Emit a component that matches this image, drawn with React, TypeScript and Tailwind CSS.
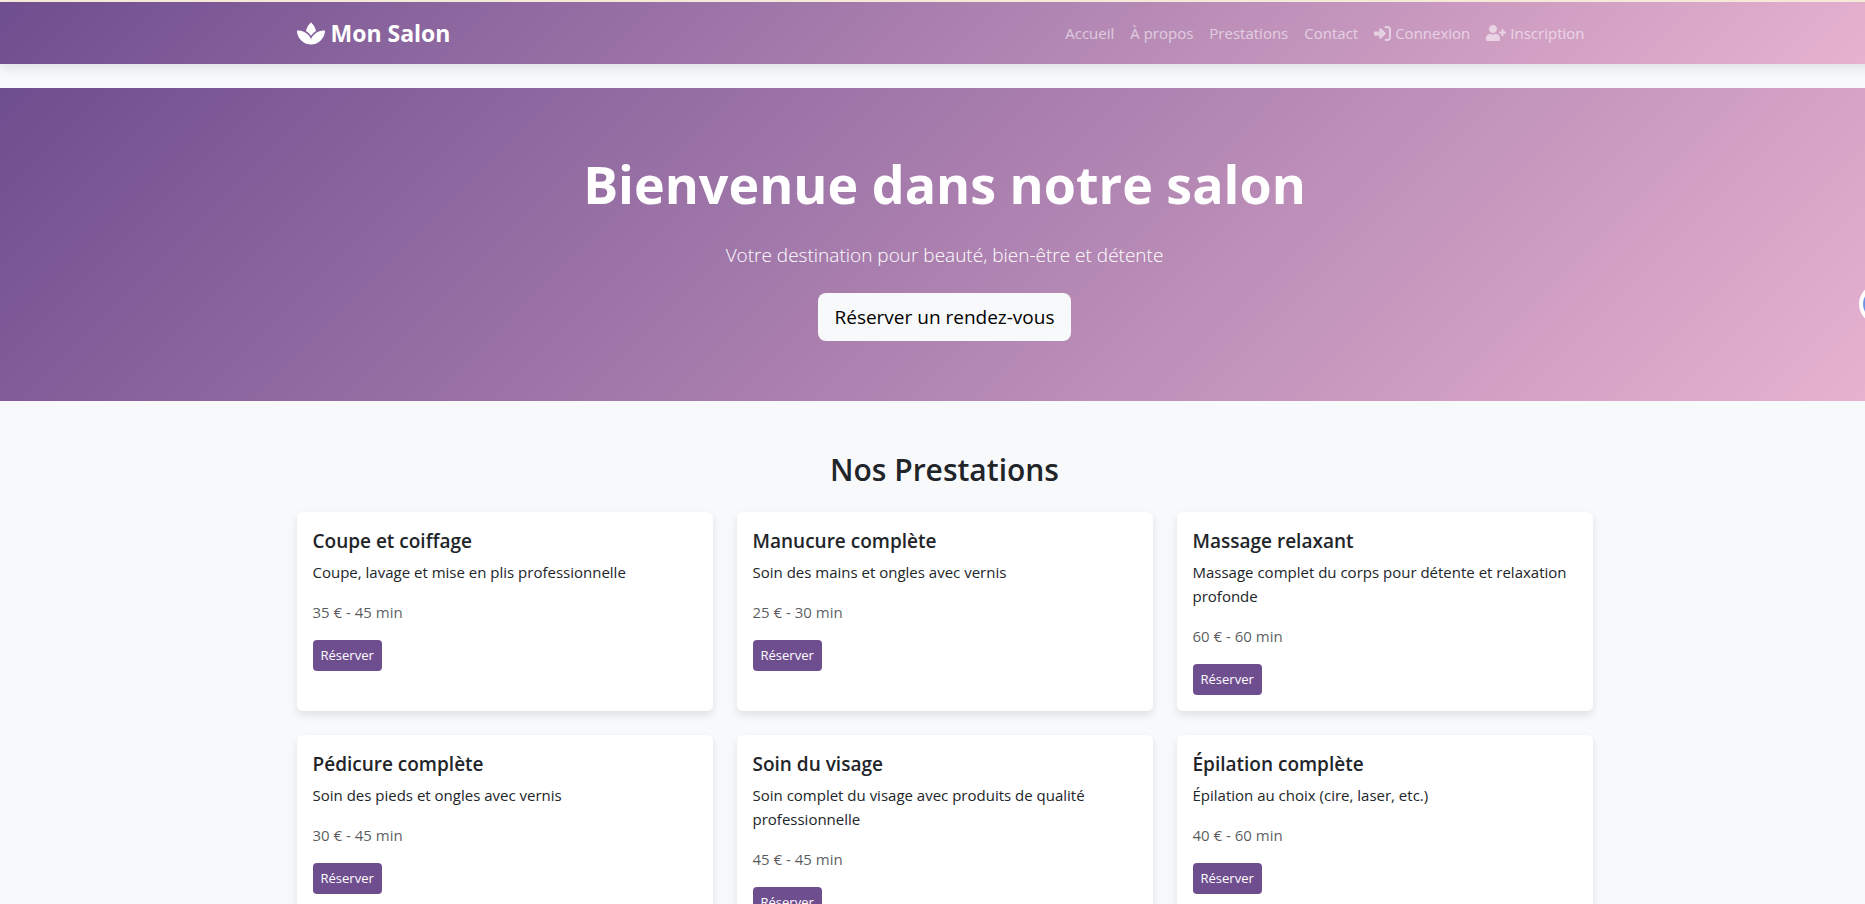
import { FaSpa, FaUserPlus } from "react-icons/fa";
import { FaRightToBracket } from "react-icons/fa6";

type Service = { title: string; text: string; price: number; minutes: number };

const services: Service[] = [
  { title: "Coupe et coiffage", text: "Coupe, lavage et mise en plis professionnelle", price: 35, minutes: 45 },
  { title: "Manucure complète", text: "Soin des mains et ongles avec vernis", price: 25, minutes: 30 },
  { title: "Massage relaxant", text: "Massage complet du corps pour détente et relaxation profonde", price: 60, minutes: 60 },
  { title: "Pédicure complète", text: "Soin des pieds et ongles avec vernis", price: 30, minutes: 45 },
  { title: "Soin du visage", text: "Soin complet du visage avec produits de qualité professionnelle", price: 45, minutes: 45 },
  { title: "Épilation complète", text: "Épilation au choix (cire, laser, etc.)", price: 40, minutes: 60 },
];

function Navbar() {
  return (
    <header className="border-t-2 border-[#f5ead8] bg-[linear-gradient(135deg,#6f4e8f,#e8b3d0)] shadow-[0_4px_12px_rgba(0,0,0,0.1)]">
      <div className="mx-auto flex h-[62px] max-w-[1320px] items-center justify-between px-3">
        <a href="#" className="flex items-center gap-1.5 text-[23px] leading-8 font-bold text-white">
          <FaSpa className="h-[25px] w-7" />
          Mon Salon
        </a>
        <nav className="flex gap-4 px-2 text-[15px] font-medium text-white/55">
          <a href="#accueil">Accueil</a>
          <a href="#apropos">À propos</a>
          <a href="#prestations">Prestations</a>
          <a href="#contact">Contact</a>
          <a href="#connexion" className="flex items-center gap-1">
            <FaRightToBracket className="size-[17px]" />
            Connexion
          </a>
          <a href="#inscription" className="flex items-center gap-1">
            <FaUserPlus className="h-4 w-5" />
            Inscription
          </a>
        </nav>
      </div>
    </header>
  );
}

function Hero() {
  return (
    <section className="mt-6 flex flex-col items-center bg-[linear-gradient(135deg,#6f4e8f,#e8b3d0)] py-15 text-center text-white">
      <h1 className="mb-5 text-[52px] leading-[71px] font-bold">Bienvenue dans notre salon</h1>
      <p className="mb-[22px] text-[19px] leading-8 font-light">Votre destination pour beauté, bien-être et détente</p>
      <button type="button" className="h-12 rounded-lg bg-[#f8f9fa] px-4 text-[19px] text-black">
        Réserver un rendez-vous
      </button>
    </section>
  );
}

function ServiceCard({ title, text, price, minutes }: Service) {
  return (
    <article className="rounded-md bg-white p-4 shadow-[0_4px_8px_rgba(0,0,0,0.1)]">
      <h3 className="mb-1.5 text-[19px] leading-[26px] font-semibold">{title}</h3>
      <p className="mb-4 leading-6">{text}</p>
      <p className="mb-4 leading-6 text-[#212529]/75">
        {price} € - {minutes} min
      </p>
      <button type="button" className="h-[31px] rounded bg-[#6f4e8f] px-2 text-[13px] text-white">
        Réserver
      </button>
    </article>
  );
}

export default function App() {
  return (
    <div className="relative min-h-screen overflow-x-clip bg-[#f8f9fb] font-['Open_Sans',sans-serif] text-[15px] text-[#212529]">
      <div className="w-[calc(100%+24px)]">
        <Navbar />
        <main>
          <Hero />
          <section className="mx-auto max-w-[1320px] px-3 py-12">
            <h2 className="mb-[22px] text-center text-[30px] leading-[41px] font-semibold">Nos Prestations</h2>
            <div className="grid grid-cols-3 gap-6">
              {services.map((service) => (
                <ServiceCard key={service.title} {...service} />
              ))}
            </div>
          </section>
        </main>
      </div>
      <div className="absolute top-[284px] -right-[34px] flex size-10 items-center justify-center rounded-full bg-white">
        <div className="size-8 rounded-full bg-[#6b93e8]" />
      </div>
    </div>
  );
}
